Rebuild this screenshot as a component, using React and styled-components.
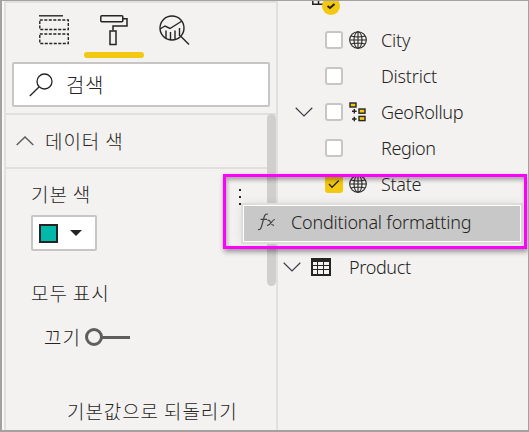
import React from "react";
import styled, { createGlobalStyle } from "styled-components";

const Global = createGlobalStyle`
  *, *::before, *::after { box-sizing: border-box; }
  body { margin: 0; overflow: hidden; }
  svg { display: block; flex: none; }
`;

const Window = styled.div`
  position: relative;
  display: flex;
  width: 529px;
  height: 432px;
  overflow: hidden;
  background: #f3f2f1;
  border: solid #a3a1a1;
  border-width: 1px 1px 2px 2px;
  color: #252423;
  font-family: "Noto Sans", "Noto Sans CJK KR", sans-serif;
  font-weight: 300;
`;

const FormatPane = styled.section`
  display: flex;
  flex: none;
  flex-direction: column;
  width: 274px;
  margin-left: 2px;
  border: solid #e1dfdf;
  border-width: 2px 2px 0 2px;
  box-shadow: -2px 0 #f8f8f8;
  font-family: "Noto Sans CJK KR", sans-serif;
`;

const Tabs = styled.nav`
  display: flex;
  flex: none;
  height: 56px;
  padding-left: 18px;
`;

const Tab = styled.button`
  display: flex;
  justify-content: center;
  width: 60px;
  height: 55px;
  padding: 12px 0 0;
  border: 0;
  background: none;
  position: relative;
  &::after {
    content: "";
    position: absolute;
    left: 0;
    bottom: 0;
    width: 60px;
    height: 6px;
    border-radius: 3px;
    background: ${(p) => (p.$active ? "#f2c811" : "transparent")};
  }
`;

const SearchBox = styled.div`
  display: flex;
  flex: none;
  align-items: center;
  gap: 13px;
  width: 258px;
  height: 45px;
  margin: 3px 0 6px 6px;
  padding-left: 15px;
  background: #fff;
  border: 2px solid #c8c6c4;
  border-radius: 2px;
`;

const Scroller = styled.div`
  position: relative;
  flex: 1;
  min-height: 0;
`;

const ScrollThumb = styled.div`
  position: absolute;
  right: 0;
  top: 1px;
  width: 9px;
  height: 172px;
  border-radius: 5px;
  background: #d0cfce;
`;

const SectionHeader = styled.div`
  display: flex;
  align-items: center;
  gap: 11px;
  height: 56px;
  padding-left: 10px;
  border: solid #e1dfdd;
  border-width: 2px 0;
`;

const Text = styled.span`
  font-size: ${(p) => p.$size || 18}px;
  letter-spacing: ${(p) => p.$track || 0}px;
  line-height: 26px;
  white-space: pre;
`;

const FormatLabel = styled(Text)`
  font-size: 19px;
  letter-spacing: 0.9px;
`;

const Fields = styled.div`
  display: flex;
  flex-direction: column;
  align-items: flex-start;
  padding: 12px 0 0 25px;
`;

const LabelRow = styled.div`
  display: flex;
  justify-content: space-between;
  width: 213px;
  height: 34px;
`;

const Dots = styled.div`
  display: flex;
  flex-direction: column;
  gap: 5px;
  margin: 8px 3px 0 0;
`;

const Dot = styled.i`
  width: 2px;
  height: 2px;
  background: #252423;
`;

const ColorButton = styled.button`
  display: flex;
  align-items: center;
  gap: 12px;
  width: 66px;
  height: 36px;
  padding: 0 6px;
  border: 2px solid #c8c6c4;
  border-radius: 2px;
  background: #fff;
`;

const Swatch = styled.span`
  width: 19px;
  height: 19px;
  border: 2px solid #252423;
  background: #01b8aa;
`;

const ShowAll = styled.div`
  display: flex;
  margin: 29px 0 0;
`;

const ToggleRow = styled.div`
  display: flex;
  align-items: center;
  gap: 4px;
  height: 26px;
  margin: 18px 0 0 13px;
`;

const ResetLink = styled.div`
  display: flex;
  margin: 48px 0 0 36px;
`;

const FieldsPane = styled.section`
  flex: 1;
  display: flex;
  flex-direction: column;
  padding-left: 4px;
`;

const TablePeek = styled.div`
  display: flex;
  height: 21px;
  padding-left: 27px;
`;

const FieldRow = styled.div`
  display: grid;
  grid-template-columns: 30px 24px 32px 1fr;
  align-items: center;
  height: 36px;
  padding-left: 13px;
`;

const Check = styled.span`
  display: flex;
  align-items: center;
  justify-content: center;
  width: 18px;
  height: 18px;
  border: 2px solid ${(p) => (p.$on ? "#f2c811" : "#c8c6c4")};
  border-radius: 3px;
  background: ${(p) => (p.$on ? "#f2c811" : "#fff")};
`;

const TableRow = styled.div`
  display: grid;
  grid-template-columns: 28px 38px 1fr;
  align-items: center;
  height: 36px;
  margin-top: 47px;
  padding-left: 1px;
`;

const Callout = styled.div`
  position: absolute;
  left: 221px;
  top: 173px;
  width: 304px;
  height: 75px;
  border: 3px solid #ff00ff;
  box-shadow: 1px 3px 5px rgba(0, 0, 0, 0.38), inset 1px 3px 4px rgba(0, 0, 0, 0.32);
`;

const Menu = styled.div`
  position: absolute;
  left: 241px;
  top: 204px;
  width: 278px;
  height: 37px;
  display: flex;
  align-items: center;
  padding: 0 0 3px 13px;
  gap: 14px;
  background: #c8c8c8;
  border: 1px solid #fff;
  box-shadow: 0 0 0 2px #dedddc, 0 0 12px rgba(0, 0, 0, 0.12);
`;

const Chevron = ({ up }) => (
  <svg width="18" height="10" viewBox="0 0 18 10" fill="none" stroke={up ? "#605e5c" : "#403a48"} strokeWidth={up ? 1.5 : 1.2}>
    <path d={up ? "M.7 9 9 1l8.3 8" : "M.7.8 9 9 17.3.8"} />
  </svg>
);

const FieldsIcon = () => (
  <svg width="30" height="30" fill="none" stroke="#252423" strokeWidth="1.4">
    <path d="M0 .8h24" />
    <path strokeDasharray="3 1.5" d="M.8 5h28.5v9.5H.8zM.8 19h28.5v9.5H.8z" />
  </svg>
);

const RollerIcon = () => (
  <svg width="28" height="31" fill="none" stroke="#252423" strokeWidth="1.5">
    <rect x=".8" y=".8" width="22" height="6" rx="1" />
    <path d="M23 3.7h4V11H13v4.5" />
    <rect x="10" y="16" width="6" height="13.5" />
  </svg>
);

const AnalyticsIcon = () => (
  <svg width="31" height="31" fill="none" stroke="#252423" strokeWidth="1.4">
    <circle cx="13" cy="13" r="12" />
    <path d="m1 14 5-3 5 2.5L23 6M7 15.5V23M11.5 17v8M16 15.5V24M20.5 13v8M22 21.5l8 8" />
  </svg>
);

const SearchIcon = () => (
  <svg width="24" height="24" fill="none" stroke="#252423" strokeWidth="1.3">
    <circle cx="15.5" cy="8.5" r="7.5" />
    <path d="M10 14 .8 23" />
  </svg>
);

const Globe = () => (
  <svg width="18" height="18" fill="none" stroke="#252423" strokeWidth="1.1">
    <circle cx="9" cy="9" r="8.3" />
    <ellipse cx="9" cy="9" rx="4" ry="8.3" />
    <path d="M9 .7v16.6M2 5q7 2 14 0M.7 9h16.6M2 13q7-2 14 0" />
  </svg>
);

const Hierarchy = () => (
  <svg width="18" height="20" fill="#f2c811" stroke="#252423" strokeWidth="1.4">
    <rect x="1" y="1" width="6" height="4" />
    <rect x="10" y="7" width="6" height="4.2" />
    <rect x="10" y="14.4" width="6" height="4.2" />
    <path d="M3 9.3h4.6M5.3 7v4.6M3 17h4.6M5.3 14.7v4.6" />
  </svg>
);

const TableIcon = () => (
  <svg width="20" height="18">
    <path fill="#252423" d="M0 0h20v18H0z" />
    <path fill="#f3f2f1" d="M2 4h4v3H2zM7 4h5v3H7zM13 4h5v3h-5zM2 8h4v3H2zM7 8h5v3H7zM13 8h5v3h-5zM2 12h4v4H2zM7 12h5v4H7zM13 12h5v4h-5z" />
  </svg>
);

const Tick = () => (
  <svg width="12" height="10" fill="none" stroke="#252423" strokeWidth="1.3">
    <path d="m1 5 3 3.3L10.8 1.5" />
  </svg>
);

const rows = [
  { name: "City", icon: <Globe />, track: -0.2 },
  { name: "District", track: -0.2 },
  { name: "GeoRollup", icon: <Hierarchy />, expand: true, track: -0.3 },
  { name: "Region", track: -0.4 },
  { name: "State", icon: <Globe />, checked: true, track: -0.3 },
];

export default function App() {
  return (
    <>
      <Global />
      <Window>
        <FormatPane>
          <Tabs>
            <Tab><FieldsIcon /></Tab>
            <Tab $active><RollerIcon /></Tab>
            <Tab><AnalyticsIcon /></Tab>
          </Tabs>
          <SearchBox><SearchIcon /><Text $size={20} $track={0.5}>검색</Text></SearchBox>
          <Scroller>
            <SectionHeader><Chevron up /><FormatLabel>데이터 색</FormatLabel></SectionHeader>
            <Fields>
              <LabelRow>
                <FormatLabel>기본 색</FormatLabel>
                <Dots><Dot /><Dot /><Dot /></Dots>
              </LabelRow>
              <ColorButton>
                <Swatch />
                <svg width="12" height="6"><path d="M0 0h12L6 6z" fill="#252423" /></svg>
              </ColorButton>
              <ShowAll><FormatLabel>모두 표시</FormatLabel></ShowAll>
              <ToggleRow>
                <FormatLabel>끄기</FormatLabel>
                <svg width="46" height="18" fill="none" stroke="#605e5c" strokeWidth="3">
                  <circle cx="9" cy="9" r="7.5" />
                  <path d="M17 9.5h28" />
                </svg>
              </ToggleRow>
              <ResetLink><FormatLabel>기본값으로 되돌리기</FormatLabel></ResetLink>
            </Fields>
            <ScrollThumb />
          </Scroller>
        </FormatPane>
        <FieldsPane>
          <TablePeek>
            <svg width="32" height="14" fill="none" stroke="#252423" strokeWidth="1.5">
              <path d="M3.8 0v3.3h14M9.5 0v3" />
              <circle cx="22" cy="5" r="9" fill="#f2c811" stroke="none" />
              <path strokeWidth="2" d="m18.5 5 2.5 2 4.5-4" />
            </svg>
          </TablePeek>
          {rows.map((r) => (
            <FieldRow key={r.name}>
              <span>{r.expand && <Chevron />}</span>
              <Check $on={r.checked}>{r.checked && <Tick />}</Check>
              <span>{r.icon}</span>
              <Text $track={r.track}>{r.name}</Text>
            </FieldRow>
          ))}
          <TableRow><Chevron /><TableIcon /><Text $track={-0.35}>Product</Text></TableRow>
        </FieldsPane>
        <Menu>
          <svg width="20" height="18" fill="none" stroke="#444" strokeWidth="1.2">
            <path d="M1 16.5c2 .6 3-1 3.8-4L7 4.5C7.8 1.5 9 .5 11 1.2M3.5 6.3h6.5M10.5 7.5c3-2 3 5.5 6.5 4.8M18 6.5c-3-.5-4 6.5-8 5.8" />
          </svg>
          <Text $track={-0.2}>Conditional formatting</Text>
        </Menu>
        <Callout />
      </Window>
    </>
  );
}
